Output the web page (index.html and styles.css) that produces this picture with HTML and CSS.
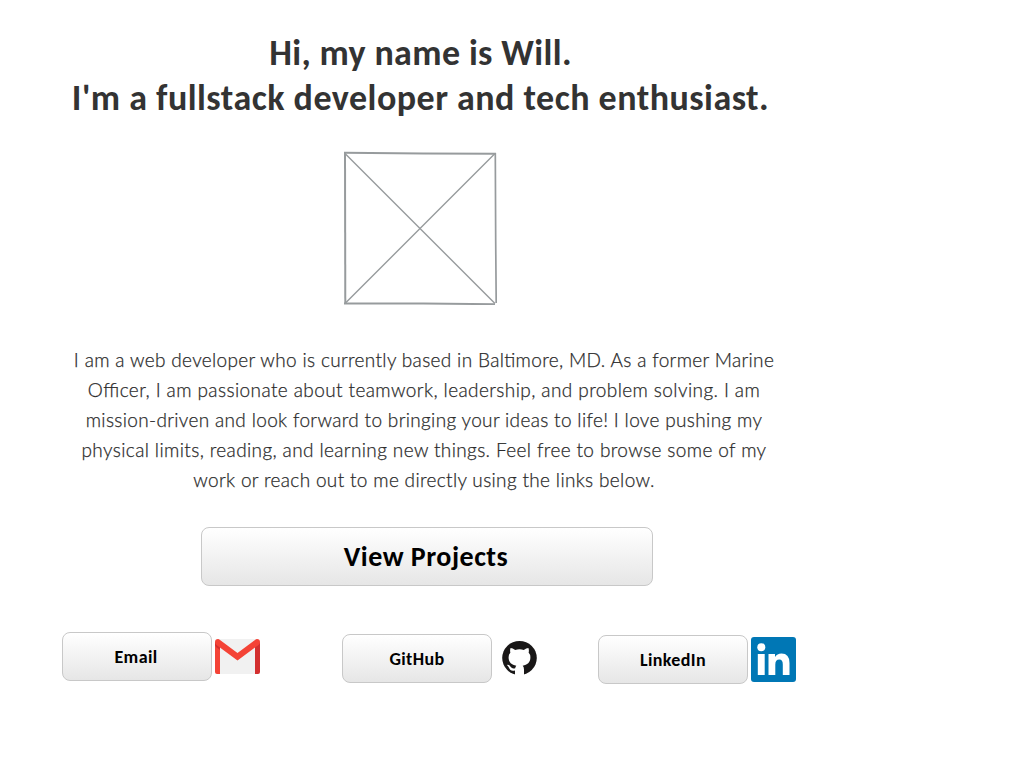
FILE: index.html
```html
<!DOCTYPE html>
<html lang="en">
<head>
<meta charset="utf-8">
<title>Will - Developer</title>
<link rel="stylesheet" href="styles.css">
</head>
<body>
<main class="page">
  <h1 class="title"><span class="line t1">Hi, my name is Will.</span><span class="line t2">I'm a fullstack developer and tech enthusiast.</span></h1>
  <svg class="photo" width="154" height="154" viewBox="0 0 154 154" fill="none" stroke="#979b9d">
    <path d="M2 2.500L152 152.500M152 2.500L2 152.500" stroke-width="1.400"/>
    <path d="M1 1.800L80 2.500L153 2.700" stroke-width="2"/>
    <path d="M152.300 2L152.700 90L153.200 152" stroke-width="1.700"/>
    <path d="M2 1.500L2.300 153" stroke-width="2"/>
    <path d="M1 152.500L80 152.500L152 153.200" stroke-width="2"/>
  </svg>
  <p class="bio"><span class="line b1">I am a web developer who is currently based in Baltimore, MD. As a former Marine</span> <span class="line b2">Officer, I am passionate about teamwork, leadership, and problem solving. I am</span> <span class="line b3">mission-driven and look forward to bringing your ideas to life! I love pushing my</span> <span class="line b4">physical limits, reading, and learning new things. Feel free to browse some of my</span> <span class="line b5">work or reach out to me directly using the links below.</span></p>
  <button class="btn projects">View Projects</button>
  <div class="links">
    <div class="link email">
      <button class="btn small">Email</button>
      <svg width="45" height="35" viewBox="0 0 45 35">
        <path fill="#f1f1f1" d="M2 0H43V35H2Z"/>
        <path fill="#f44336" d="M0 3H5V35H2Q0 35 0 33Z"/>
        <path fill="#d32f2f" d="M40 5L45 3V33Q45 35 43 35H40Z"/>
        <path fill="#d32f2f" d="M0 3L5 7.500V11L1 8Q0 7 0 5Z"/>
        <path fill="#f44336" d="M0 3Q0 0 3 0Q4 0 5 1L22.500 14L40 1Q41 0 42 0Q45 0 45 3Q45 5 43.500 6L22.500 21.500L1.500 6Q0 5 0 3Z"/>
      </svg>
    </div>
    <div class="link github">
      <button class="btn small">GitHub</button>
      <svg width="35" height="34" viewBox="0 0 35 34">
        <ellipse cx="17.500" cy="17" rx="17.300" ry="17" fill="#191717"/>
        <path fill="#fff" d="M13 35V29.500C9.500 30.500 8 29 7 26.800Q6 24.800 4.800 24Q6.800 23.200 8.600 25.800Q10.300 28.300 13.200 27.200Q13.300 25.800 14.300 24.700C9.800 24 6.600 21.700 6.600 16.300Q6.600 13.500 8.400 11.600Q7.700 9.500 8.600 7Q10.600 7 13.200 8.900Q17.500 7.800 21.800 8.900Q24.400 7 26.400 7Q27.300 9.500 26.600 11.600Q28.400 13.500 28.400 16.300C28.400 21.700 25.200 24 20.700 24.700Q22 26 22 28.500V35Z"/>
      </svg>
    </div>
    <div class="link linkedin">
      <button class="btn small">LinkedIn</button>
      <svg width="45" height="45" viewBox="0 0 45 45">
        <rect width="45" height="45" rx="3" fill="#0077b5"/>
        <g fill="#fff"><circle cx="10.300" cy="10.200" r="4"/><path d="M6.800 17H13.700V38H6.800Z"/><path d="M17.500 17H24V20Q26 16.500 30.500 16.500Q38.500 16.500 38.500 26V38H31.800V27.500Q31.800 22.500 28.300 22.500Q24.300 22.500 24.300 27.500V38H17.500Z"/></g>
      </svg>
    </div>
  </div>
</main>
</body>
</html>
```
FILE: styles.css
```css
body {
  margin: 0;
  background: #fff;
  color: #333;
  font-family: Carlito, Lato, "Open Sans", sans-serif;
}
.page {
  box-sizing: border-box;
  width: 856px;
  padding-top: 31px;
}
.title {
  margin: 0;
  padding-right: 15px;
  font-size: 36px;
  line-height: 45px;
  font-weight: 700;
  text-align: center;
}
.line {
  display: block;
  white-space: nowrap;
}
.t1 {
  letter-spacing: 0.36px;
}
.t2 {
  letter-spacing: 0.48px;
}
.photo {
  display: block;
  margin: 30px 0 0 343px;
}
.bio {
  margin: 40px 0 0;
  padding-right: 8px;
  font-family: Lato, Carlito, sans-serif;
  font-size: 19px;
  line-height: 30px;
  font-weight: 300;
  font-feature-settings: "liga" 1;
  color: #2b2b2b;
  -webkit-text-stroke: 0.25px #2b2b2b;
  text-align: center;
}
.b1, .b3, .b5 {
  letter-spacing: 0.34px;
}
.b2 {
  letter-spacing: 0.41px;
}
.b4 {
  letter-spacing: 0.38px;
}
.btn {
  box-sizing: border-box;
  display: block;
  padding: 0;
  border: 1px solid #c8c8c8;
  border-radius: 8px;
  background: linear-gradient(#fff, #e6e6e6);
  color: #000;
  font-family: inherit;
  font-weight: 700;
}
.projects {
  width: 452px;
  height: 59px;
  margin: 32px 0 0 201px;
  padding-right: 2px;
  font-size: 28px;
  letter-spacing: 0.5px;
}
.small {
  width: 150px;
  height: 49px;
  font-size: 18px;
  letter-spacing: 0.4px;
}
.links {
  display: flex;
  align-items: flex-start;
  padding: 46px 0 0 62px;
}
.link {
  display: flex;
  align-items: center;
}
.email {
  gap: 3px;
}
.email .small {
  padding-right: 2px;
}
.github {
  gap: 10px;
  margin: 2px 0 0 82px;
}
.linkedin {
  gap: 3px;
  margin: 3px 0 0 61px;
}
.github svg {
  margin-bottom: 2px;
}
```
